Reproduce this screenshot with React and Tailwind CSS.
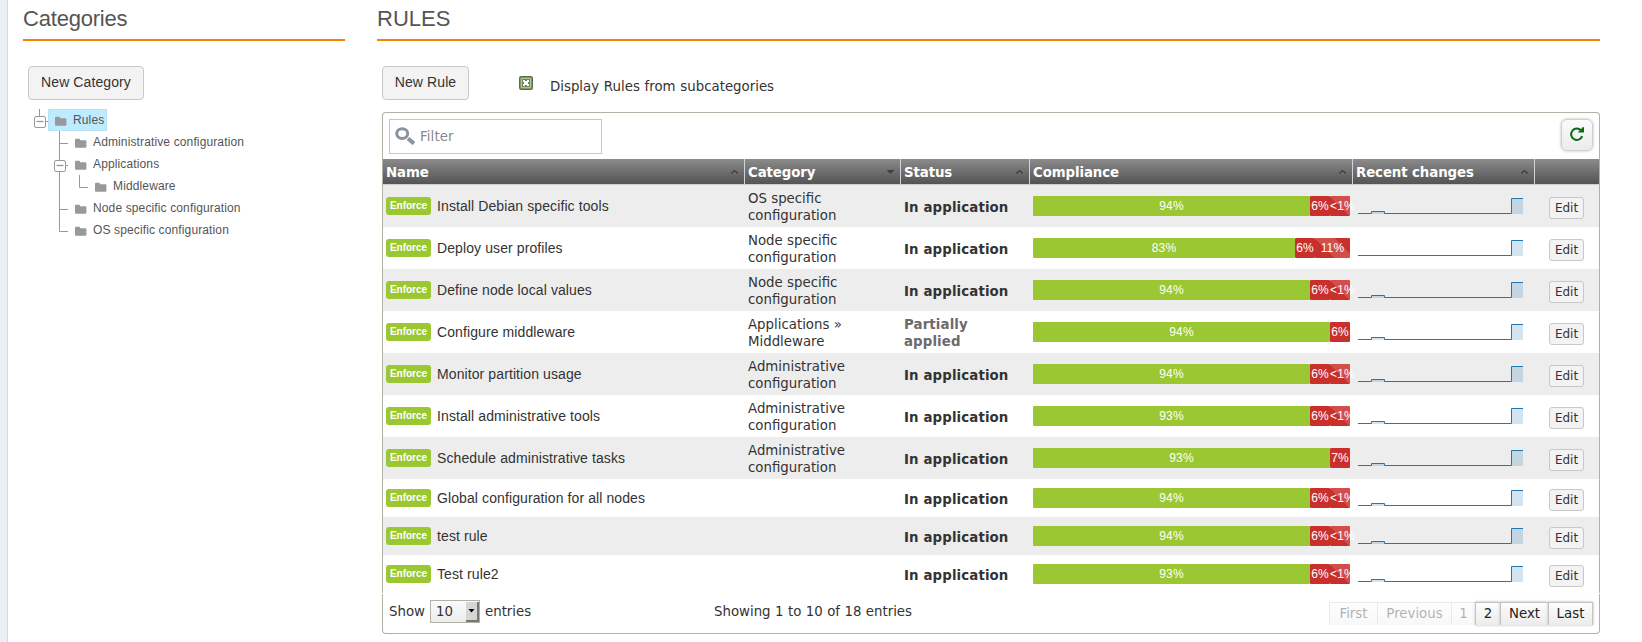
import React from "react";

const SANS = "font-['DejaVu_Sans',Verdana,sans-serif]";
const HELV = "font-['Liberation_Sans',Arial,sans-serif]";

const COLS = "grid grid-cols-[362px_156px_129px_323px_182px_64px]";

const A = [
  { w: 277, t: "94%", k: "ok" },
  { w: 20, t: "6%", k: "bad" },
  { w: 20, t: "<1%", k: "stripe" },
];
const A93 = [{ w: 277, t: "93%", k: "ok" }, A[1], A[2]];
const B = [
  { w: 262, t: "83%", k: "ok" },
  { w: 20, t: "6%", k: "bad" },
  { w: 35, t: "11%", k: "stripe" },
];

const RULES = [
  { name: "Install Debian specific tools", cat: ["OS specific", "configuration"], bar: A, bump: true },
  { name: "Deploy user profiles", cat: ["Node specific", "configuration"], bar: B, bump: false },
  { name: "Define node local values", cat: ["Node specific", "configuration"], bar: A, bump: true },
  {
    name: "Configure middleware",
    cat: ["Applications »", "Middleware"],
    partial: true,
    bar: [{ w: 297, t: "94%", k: "ok" }, { w: 20, t: "6%", k: "bad" }],
    bump: true,
  },
  { name: "Monitor partition usage", cat: ["Administrative", "configuration"], bar: A, bump: true },
  { name: "Install administrative tools", cat: ["Administrative", "configuration"], bar: A93, bump: true },
  {
    name: "Schedule administrative tasks",
    cat: ["Administrative", "configuration"],
    bar: [{ w: 297, t: "93%", k: "ok" }, { w: 20, t: "7%", k: "bad" }],
    bump: true,
  },
  { name: "Global configuration for all nodes", bar: A, bump: true },
  { name: "test rule", bar: A, bump: true },
  { name: "Test rule2", bar: A93, bump: true },
];

const SEGMENT = {
  ok: "bg-[#9bc832]",
  bad: "bg-[#c9302c]",
  stripe:
    "bg-[#c9302c] bg-[linear-gradient(45deg,rgba(255,255,255,0.15)_25%,transparent_25%,transparent_50%,rgba(255,255,255,0.15)_50%,rgba(255,255,255,0.15)_75%,transparent_75%,transparent)] bg-[length:40px_40px]",
};

function Heading({ children, className }) {
  return (
    <h2
      className={`${HELV} h-[41px] border-b-2 border-[#ef8207] pt-[6px] text-[22px] leading-[26px] text-[#555] ${className}`}
    >
      {children}
    </h2>
  );
}

function Button({ children, className }) {
  return (
    <button
      className={`${HELV} h-[34px] rounded-[4px] border border-[#c8c8c8] bg-[#f3f3f3] pb-[2px] text-[14px] leading-[20px] tracking-[0.1px] text-[#333] ${className}`}
    >
      {children}
    </button>
  );
}

function Gutter({ kind }) {
  return (
    <svg width="20" height="22" viewBox="0 0 20 22" className="shrink-0" fill="none" stroke="#999">
      {kind === "root" && <path d="M11.5 0V7M18 12.5H20" />}
      {kind === "open" && <path d="M11.5 0V22M18 12.5H20" />}
      {kind === "tee" && <path d="M11.5 0V22M11 12.5H20" />}
      {kind === "line" && <path d="M11.5 0V22" />}
      {kind === "end" && <path d="M11.5 0V12.5H20" />}
      {(kind === "root" || kind === "open") && (
        <>
          <rect x="6.5" y="7.5" width="11" height="11" rx="1.5" fill="#fff" />
          <path d="M8.5 12.5H15.5" strokeWidth="1.3" />
        </>
      )}
    </svg>
  );
}

function TreeRow({ gutters, label, selected }) {
  return (
    <div className="flex h-[22px]">
      {gutters.map((g, i) => (
        <Gutter key={i} kind={g} />
      ))}
      <div
        className={`flex h-[22px] items-start rounded-[2px] pl-[7px] ${
          selected ? "w-[59px] bg-[#beebff] shadow-[inset_0_0_1px_#6aa5c0]" : ""
        }`}
      >
        <svg width="12" height="10" viewBox="0 0 12 10" className="mt-[7px] shrink-0" fill="#999">
          <path d="M0 1.8Q0 .8 1 .8H4Q5 .8 5 1.8V2.2H10.4Q11.4 2.2 11.4 3.2V8.7Q11.4 9.7 10.4 9.7H1Q0 9.7 0 8.7Z" />
        </svg>
        <span className={`${HELV} ml-[6px] pt-[3px] text-[12px] leading-[16px] tracking-[0.13px] whitespace-nowrap text-[#555]`}>
          {label}
        </span>
      </div>
    </div>
  );
}

function Th({ children, last, down }) {
  return (
    <div className={`flex items-center justify-between pl-[3px] pr-[5px] ${last ? "" : "border-r border-[#d3d3d3]"}`}>
      <span className="pt-[2px]">{children}</span>
      {!last && (
        <svg width="9" height="6" viewBox="0 0 9 6" className="mt-px">
          {down ? (
            <path d="M0.5 1H8.5L4.5 5Z" fill="#3f3f3f" />
          ) : (
            <path d="M1.2 4.6L4.5 1.6L7.8 4.6" stroke="#3f3f3f" strokeWidth="1.4" fill="none" />
          )}
        </svg>
      )}
    </div>
  );
}

function Spark({ bump }) {
  const d = bump ? "M0 15.5H13.5V13.5H26.5V15.5H153.5V0.5H165" : "M0 15.5H153.5V0.5H165";
  return (
    <svg width="165" height="16" viewBox="0 0 165 16" fill="none">
      <path d={`${d}V16H0Z`} fill="#1f77b4" fillOpacity="0.2" />
      <path d={d} stroke="#1f77b4" />
    </svg>
  );
}

function Row({ rule, odd }) {
  const tall = !!rule.cat;
  return (
    <div className={`${COLS} ${tall ? "h-[42px]" : "h-[38px]"} ${odd ? "bg-[#ededed]" : "bg-white"}`}>
      <div className="flex items-center pl-[3px]">
        <span
          className={`${HELV} flex h-[18px] w-[45px] justify-center rounded-[3px] bg-[#9bc832] pt-[2px] text-[10px] leading-[13px] font-bold text-white`}
        >
          Enforce
        </span>
        <span className={`${HELV} ml-[6px] text-[14px] leading-[18px] tracking-[0.1px] text-[#333]`}>{rule.name}</span>
      </div>
      <div className="flex flex-col justify-center pl-[3px] pt-px leading-[17px]">
        {tall && rule.cat.map((line) => <div key={line}>{line}</div>)}
      </div>
      <div
        className={`flex flex-col justify-center pl-[3px] leading-[17px] font-bold tracking-[0.12px] ${
          rule.partial ? "pt-px text-[#6b6b6b]" : "pt-[2px]"
        }`}
      >
        {rule.partial ? (
          <>
            <div>Partially</div>
            <div>applied</div>
          </>
        ) : (
          "In application"
        )}
      </div>
      <div className="flex items-center pl-[3px]">
        <div className={`${HELV} flex h-[20px] text-[12px] leading-[20px] tracking-[0.2px] text-white`}>
          {rule.bar.map((s, i) => (
            <div
              key={i}
              className={`flex rounded-[1px] whitespace-nowrap ${
                s.t === "<1%" ? "justify-start" : "justify-center"
              } ${SEGMENT[s.k]}`}
              style={{ width: s.w }}
            >
              {s.t}
            </div>
          ))}
        </div>
      </div>
      <div className="flex items-center pl-[5px]">
        <Spark bump={rule.bump} />
      </div>
      <div className="flex items-center pl-[14px] pt-[4px]">
        <button className="h-[22px] w-[35px] rounded-[3px] border border-[#c8c8c8] bg-[#f3f3f3] pb-px text-[12px] leading-[18px]">
          Edit
        </button>
      </div>
    </div>
  );
}

function Page({ children, width, off }) {
  return (
    <button
      className={`${width} h-[23px] border-t border-l border-[#c4c3bb] bg-gradient-to-b from-[#fdfdfd] to-[#ececec] pb-px leading-[20px] text-[#222] last:border-r ${
        off ? "opacity-35" : "shadow-[0_0_3px_#bbb]"
      }`}
    >
      {children}
    </button>
  );
}

export default function App() {
  return (
    <div className={`${SANS} flex h-[642px] w-[1642px] overflow-hidden bg-white text-[13.33px] text-[#333]`}>
      <div className="w-[8px] shrink-0 border-r border-[#d3dae0] bg-[#ebeff4]" />

      <aside className="ml-[15px] w-[322px] shrink-0">
        <Heading className="tracking-[-0.2px]">Categories</Heading>
        <div className="pt-[25px] pl-[5px]">
          <Button className="w-[116px]">New Category</Button>
          <div className="mt-[9px]">
            <TreeRow gutters={["root"]} label="Rules" selected />
            <TreeRow gutters={["", "tee"]} label="Administrative configuration" />
            <TreeRow gutters={["", "open"]} label="Applications" />
            <TreeRow gutters={["", "line", "end"]} label="Middleware" />
            <TreeRow gutters={["", "tee"]} label="Node specific configuration" />
            <TreeRow gutters={["", "end"]} label="OS specific configuration" />
          </div>
        </div>
      </aside>

      <main className="ml-[32px] w-[1223px] shrink-0">
        <Heading>RULES</Heading>
        <div className="pl-[5px]">
          <div className="flex h-[71px] items-start pt-[25px]">
            <Button className="w-[87px]">New Rule</Button>
            <svg width="14" height="14" viewBox="0 0 14 14" className="mt-[10px] ml-[50px]">
              <rect x=".75" y=".75" width="12.5" height="12.5" rx="1.5" fill="#a9cc82" stroke="#5c6652" strokeWidth="1.5" />
              <path d="M3 3h8v8h-8z" fill="#6f875a" />
              <path d="M4 4h2v1h2v-1h2v2h-1v2h1v2h-2v-1h-2v1h-2v-2h1v-2h-1z" fill="#fff" />
            </svg>
            <span className="mt-[12px] ml-[17px] leading-[17px] [word-spacing:0.5px]">
              Display Rules from subcategories
            </span>
          </div>

          <div className="h-[481px] rounded-t-[4px] border-x border-t border-[#b2b1a5]">
            <div className="flex h-[46px] items-start justify-between pt-[6px] pr-[6px] pl-[6px]">
              <div className="flex h-[35px] w-[213px] items-center border border-[#c6c6c6] pl-[5px]">
                <svg width="21" height="18" viewBox="0 0 21 18" fill="none" stroke="#8a93a0" className="-mt-px">
                  <ellipse cx="7.2" cy="6.6" rx="5.5" ry="4.9" strokeWidth="3" />
                  <path d="M13 11.4L19 16.6" strokeWidth="4" />
                </svg>
                <span className="ml-[4px] leading-[17px] tracking-[0.1px] text-[#888]">Filter</span>
              </div>
              <div className="flex h-[32px] w-[32px] items-center justify-center rounded-[6px] border border-[#cfcfcf] bg-gradient-to-b from-[#fbfbfb] to-[#ececec] shadow-[0_0_3px_#bbb]">
                <svg width="16" height="16" viewBox="0 0 16 16" fill="none" className="-mt-[3px]">
                  <path d="M12.2 4.6A5.7 5.7 0 1 0 13.2 10.2" stroke="#0b6b12" strokeWidth="2" />
                  <path d="M15 1.2V6.6H9.4V5.4L11.2 4.6L13.4 1.2Z" fill="#0b6b12" />
                </svg>
              </div>
            </div>

            <div
              className={`${COLS} h-[26px] border-b border-[#cfcfcf] bg-gradient-to-b from-[#8b8b8b] to-[#545454] leading-[17px] font-bold tracking-[-0.1px] text-white`}
            >
              <Th>Name</Th>
              <Th down>Category</Th>
              <Th>Status</Th>
              <Th>Compliance</Th>
              <Th>Recent changes</Th>
              <Th last />
            </div>

            {RULES.map((r, i) => (
              <Row key={r.name} rule={r} odd={i % 2 === 0} />
            ))}
          </div>

          <div className="mt-px flex h-[40px] items-start rounded-b-[4px] border-x border-b border-[#b2b1a5] pl-[6px]">
            <span className="mt-[9px] w-[41px] leading-[17px]">Show</span>
            <div className="mt-[6px] flex h-[23px] w-[50px] items-center border border-[#b2b1a5] bg-gradient-to-b from-[#fbfbfb] to-[#ececec] pl-[5px]">
              <span className="w-[30px] leading-[17px]">10</span>
              <span className="flex h-[20px] w-[13px] items-center justify-center border-r-2 border-b-2 border-[#777] bg-[#d6d6d6]">
                <svg width="7" height="4" viewBox="0 0 7 4">
                  <path d="M0.5 0H6.5L3.5 3.6Z" fill="#000" />
                </svg>
              </span>
            </div>
            <span className="mt-[9px] ml-[5px] w-[229px] leading-[17px]">entries</span>
            <span className="mt-[9px] leading-[17px] [word-spacing:0.2px]">Showing 1 to 10 of 18 entries</span>
            <div className="mt-[8px] mr-[6px] ml-auto flex">
              <Page width="w-[48px]" off>First</Page>
              <Page width="w-[74px]" off>Previous</Page>
              <Page width="w-[24px]" off>1</Page>
              <Page width="w-[25px]">2</Page>
              <Page width="w-[48px]">Next</Page>
              <Page width="w-[45px]">Last</Page>
            </div>
          </div>
        </div>
      </main>
    </div>
  );
}
